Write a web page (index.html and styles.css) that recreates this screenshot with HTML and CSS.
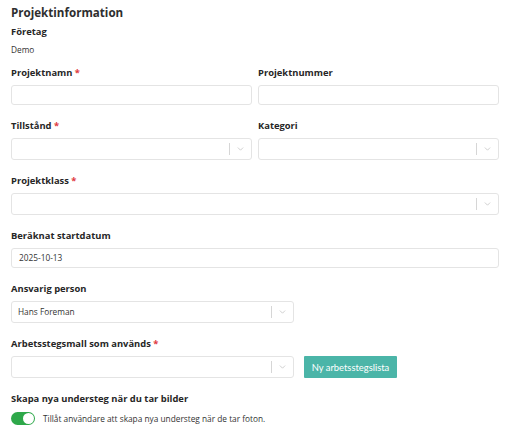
FILE: index.html
```html
<!DOCTYPE html>
<html lang="sv">
<head>
<meta charset="utf-8">
<title>Projektinformation</title>
<link rel="stylesheet" href="styles.css">
</head>
<body>
<div class="page">
  <h2 class="title">Projektinformation</h2>
  <div class="info">
    <div class="label">Företag</div>
    <div class="value">Demo</div>
  </div>

  <div class="row two">
    <div class="field">
      <div class="label">Projektnamn <span class="req">*</span></div>
      <div class="input"></div>
    </div>
    <div class="field">
      <div class="label">Projektnummer</div>
      <div class="input"></div>
    </div>
  </div>

  <div class="row two">
    <div class="field">
      <div class="label">Tillstånd <span class="req">*</span></div>
      <div class="select"><span class="sel-value"></span><span class="sep"></span><span class="chev"><svg viewBox="0 0 8 5" width="7" height="4"><path d="M0.7 0.7 L4 4 L7.3 0.7" fill="none" stroke="#c4c4c4" stroke-width="1"/></svg></span></div>
    </div>
    <div class="field">
      <div class="label">Kategori</div>
      <div class="select"><span class="sel-value"></span><span class="sep"></span><span class="chev"><svg viewBox="0 0 8 5" width="7" height="4"><path d="M0.7 0.7 L4 4 L7.3 0.7" fill="none" stroke="#c4c4c4" stroke-width="1"/></svg></span></div>
    </div>
  </div>

  <div class="row">
    <div class="field">
      <div class="label">Projektklass <span class="req">*</span></div>
      <div class="select"><span class="sel-value"></span><span class="sep"></span><span class="chev"><svg viewBox="0 0 8 5" width="7" height="4"><path d="M0.7 0.7 L4 4 L7.3 0.7" fill="none" stroke="#c4c4c4" stroke-width="1"/></svg></span></div>
    </div>
  </div>

  <div class="row">
    <div class="field">
      <div class="label">Beräknat startdatum</div>
      <div class="input"><span class="in-value">2025-10-13</span></div>
    </div>
  </div>

  <div class="row">
    <div class="field narrow">
      <div class="label">Ansvarig person</div>
      <div class="select"><span class="sel-value">Hans Foreman</span><span class="sep"></span><span class="chev"><svg viewBox="0 0 8 5" width="7" height="4"><path d="M0.7 0.7 L4 4 L7.3 0.7" fill="none" stroke="#c4c4c4" stroke-width="1"/></svg></span></div>
    </div>
  </div>

  <div class="row">
    <div class="field">
      <div class="label">Arbetsstegsmall som används <span class="req">*</span></div>
      <div class="with-btn">
        <div class="select narrow-sel"><span class="sel-value"></span><span class="sep"></span><span class="chev"><svg viewBox="0 0 8 5" width="7" height="4"><path d="M0.7 0.7 L4 4 L7.3 0.7" fill="none" stroke="#c4c4c4" stroke-width="1"/></svg></span></div>
        <button class="btn" type="button">Ny arbetsstegslista</button>
      </div>
    </div>
  </div>

  <div class="row">
    <div class="field">
      <div class="label">Skapa nya understeg när du tar bilder</div>
      <div class="toggle-row">
        <span class="toggle"><span class="knob"></span></span>
        <span class="toggle-text">Tillåt användare att skapa nya understeg när de tar foton.</span>
      </div>
    </div>
  </div>
</div>
</body>
</html>
```

FILE: styles.css
```css
* { box-sizing: border-box; }
html, body {
  margin: 0;
  padding: 0;
  background: #ffffff;
}
body {
  font-family: "Open Sans", "Noto Sans", "Liberation Sans", sans-serif;
  color: #2b2b2b;
}
.page {
  width: 515px;
  padding: 5px 16px 0 11px;
}
.title {
  margin: 0;
  font-size: 11.6px;
  line-height: 16px;
  font-weight: 700;
  color: #2e2e2e;
}
.info {
  margin-top: 4px;
}
.label {
  font-size: 9.4px;
  line-height: 14px;
  font-weight: 700;
  color: #262626;
  white-space: nowrap;
}
.req {
  color: #e0393e;
}
.value {
  margin-top: 4px;
  font-size: 8.3px;
  line-height: 14px;
  color: #333;
}
.row {
  margin-top: 14px;
}
.info + .row {
  margin-top: 9px;
}
.row.two {
  display: grid;
  grid-template-columns: 1fr 1fr;
  column-gap: 6px;
}
.field {
  display: flex;
  flex-direction: column;
  gap: 5px;
}
.field.narrow {
  width: 283px;
}
.input {
  height: 20px;
  border: 1px solid #e4e4e4;
  border-radius: 3px;
  display: flex;
  align-items: center;
  padding: 0 7px;
}
.in-value, .sel-value {
  font-size: 8.3px;
  color: #333;
  line-height: 12px;
}
.select {
  height: 22px;
  border: 1px solid #e4e4e4;
  border-radius: 3px;
  display: flex;
  align-items: center;
  padding-left: 6px;
}
.sel-value {
  flex: 1;
}
.sep {
  width: 1px;
  height: 12px;
  background: #d6d6d6;
}
.chev {
  width: 21px;
  display: flex;
  justify-content: center;
  align-items: center;
}
.chev svg { display: block; }
.with-btn {
  display: flex;
  gap: 10px;
  align-items: center;
}
.narrow-sel {
  width: 283px;
}
.btn {
  height: 22px;
  width: 93px;
  border: none;
  border-radius: 1px;
  background: #4bb5a8;
  color: #ffffff;
  font-family: "Lato", "Open Sans", sans-serif;
  font-size: 9.4px;
  padding: 0;
  cursor: pointer;
}
.toggle-row {
  display: flex;
  align-items: center;
  gap: 8px;
  margin-top: 1px;
}
.toggle {
  position: relative;
  width: 24px;
  height: 13px;
  border-radius: 7px;
  background: #2ea84a;
  flex: none;
}
.knob {
  position: absolute;
  top: 1px;
  right: 1px;
  width: 11px;
  height: 11px;
  border-radius: 50%;
  background: #ffffff;
}
.toggle-text {
  font-size: 8.3px;
  line-height: 12px;
  color: #333;
}
```
